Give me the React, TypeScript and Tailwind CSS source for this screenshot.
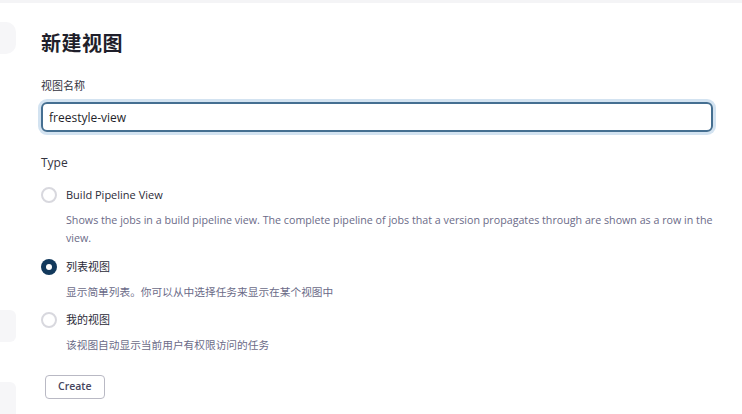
import { useState } from 'react';

const OPTIONS = [
  {
    id: 'pipeline',
    label: 'Build Pipeline View',
    desc: 'Shows the jobs in a build pipeline view. The complete pipeline of jobs that a version propagates through are shown as a row in the view.',
  },
  {
    id: 'list',
    label: '列表视图',
    desc: '显示简单列表。你可以从中选择任务来显示在某个视图中',
  },
  {
    id: 'my',
    label: '我的视图',
    desc: '该视图自动显示当前用户有权限访问的任务',
  },
];

const font = { fontFamily: '"Open Sans", "Noto Sans CJK SC", sans-serif' };

export default function App() {
  const [name, setName] = useState('freestyle-view');
  const [type, setType] = useState('list');

  return (
    <div className="w-[742px] h-[414px] overflow-hidden bg-white text-[#1f1f2b]" style={font}>
      <div className="h-[3px] bg-[#f4f4f6]" />
      <div className="flex">
        {/* sidebar remnants */}
        <div className="w-[16px] shrink-0 flex flex-col">
          <div className="mt-[19px] h-[32px] rounded-r-[10px] bg-[#f6f6f8]" />
          <div className="mt-[256px] h-[32px] rounded-r-[6px] bg-[#f6f6f8]" />
          <div className="mt-[40px] h-[40px] rounded-r-[6px] bg-[#f6f6f8]" />
        </div>

        <main className="flex-1 pl-[25px] pr-[29px]">
          <h1 className="mt-[27px] text-[20px] leading-[28px] font-bold tracking-[0.5px]">新建视图</h1>

          <label className="block mt-[20px] text-[11px] leading-[16px] text-[#333340]">视图名称</label>
          <input
            value={name}
            onChange={(e) => setName(e.target.value)}
            className="block mt-[8px] w-full h-[30px] px-[6px] rounded-[6px] border-2 border-[#456f91] shadow-[0_0_0_3px_#d3e3f1] outline-none text-[12px] text-[#1f1f2b]"
          />

          <div className="mt-[23px] text-[12px] leading-[16px] text-[#333340]">Type</div>

          <div className="mt-[15px] flex flex-col gap-[10px]">
            {OPTIONS.map((o, i) => {
              const checked = type === o.id;
              return (
                <div key={o.id} className={i === 0 ? 'pb-[1px]' : ''}>
                  <label className="flex items-center gap-[9px] cursor-pointer h-[18px]" onClick={() => setType(o.id)}>
                    {checked ? (
                      <span className="w-[16px] h-[16px] rounded-full bg-[#12395c] flex items-center justify-center">
                        <span className="w-[6px] h-[6px] rounded-full bg-white" />
                      </span>
                    ) : (
                      <span className="w-[16px] h-[16px] rounded-full border-2 border-[#d8d8de] bg-white" />
                    )}
                    <span className={i === 0 ? 'text-[11px] font-medium text-[#2b2b38]' : 'text-[11px] font-normal text-[#2b2b38]'}>
                      {o.label}
                    </span>
                  </label>
                  <p className="mt-[7px] pl-[25px] mr-[-8px] text-[10.7px] leading-[18px] text-[#6b6b88]">{o.desc}</p>
                </div>
              );
            })}
          </div>

          <button className="mt-[21px] ml-[4px] h-[24px] px-[12px] rounded-[4px] border border-[#b9b9c4] text-[10.5px] font-semibold text-[#45455e] bg-white">
            Create
          </button>
        </main>
      </div>
    </div>
  );
}
